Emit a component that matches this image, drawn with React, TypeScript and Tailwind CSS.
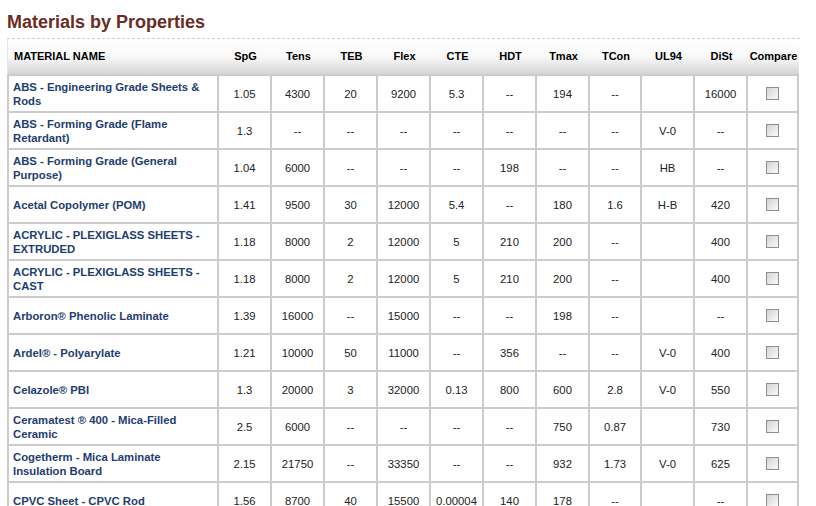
import React from "react";

type Row = { name: string; values: string[] };

const COLUMNS = ["SpG", "Tens", "TEB", "Flex", "CTE", "HDT", "Tmax", "TCon", "UL94", "DiSt", "Compare"];

const ROWS: Row[] = [
  { name: "ABS - Engineering Grade Sheets & Rods", values: ["1.05", "4300", "20", "9200", "5.3", "--", "194", "--", "", "16000"] },
  { name: "ABS - Forming Grade (Flame Retardant)", values: ["1.3", "--", "--", "--", "--", "--", "--", "--", "V-0", "--"] },
  { name: "ABS - Forming Grade (General Purpose)", values: ["1.04", "6000", "--", "--", "--", "198", "--", "--", "HB", "--"] },
  { name: "Acetal Copolymer (POM)", values: ["1.41", "9500", "30", "12000", "5.4", "--", "180", "1.6", "H-B", "420"] },
  { name: "ACRYLIC - PLEXIGLASS SHEETS - EXTRUDED", values: ["1.18", "8000", "2", "12000", "5", "210", "200", "--", "", "400"] },
  { name: "ACRYLIC - PLEXIGLASS SHEETS - CAST", values: ["1.18", "8000", "2", "12000", "5", "210", "200", "--", "", "400"] },
  { name: "Arboron® Phenolic Laminate", values: ["1.39", "16000", "--", "15000", "--", "--", "198", "--", "", "--"] },
  { name: "Ardel® - Polyarylate", values: ["1.21", "10000", "50", "11000", "--", "356", "--", "--", "V-0", "400"] },
  { name: "Celazole® PBI", values: ["1.3", "20000", "3", "32000", "0.13", "800", "600", "2.8", "V-0", "550"] },
  { name: "Ceramatest ® 400 - Mica-Filled Ceramic", values: ["2.5", "6000", "--", "--", "--", "--", "750", "0.87", "", "730"] },
  { name: "Cogetherm - Mica Laminate Insulation Board", values: ["2.15", "21750", "--", "33350", "--", "--", "932", "1.73", "V-0", "625"] },
  { name: "CPVC Sheet - CPVC Rod", values: ["1.56", "8700", "40", "15500", "0.00004", "140", "178", "--", "", "--"] },
];

// column template shared by header and body grids
const GRID = "grid grid-cols-[208px_51px_51px_51px_51px_51px_51px_51px_50px_51px_51px_49px]";

function Checkbox() {
  return (
    <span className="block w-[13px] h-[13px] border border-[#8e8e8e] bg-linear-to-br from-[#d4d4d4] to-[#fafafa]" />
  );
}

export default function App() {
  return (
    <div className="min-h-screen bg-white px-[7px] pt-[10px] font-['Liberation_Sans',Arial,sans-serif]">
      <h1 className="text-[18px] leading-[24px] font-bold text-[#6b2c25]">Materials by Properties</h1>
      <div className="mt-[4px] w-[793px] border-t border-dashed border-[#d0d0d0]" />

      <div className="w-[792px]">
        {/* Header */}
        <div className={`${GRID} gap-x-[2px] px-[2px] h-[35px] bg-linear-to-b from-white via-[#f9f9f9] to-[#d5d5d5] border-l border-[#e4e4e4] text-[11px] font-bold text-black`}>
          <div className="flex items-center pl-[4px]">MATERIAL NAME</div>
          {COLUMNS.map((c) => (
            <div key={c} className="flex items-center justify-center">
              {c}
            </div>
          ))}
        </div>

        {/* Body */}
        <div className={`${GRID} gap-[2px] p-[2px] bg-[#cccccc] text-[11.3px] leading-[14px]`}>
          {ROWS.map((row) => (
            <React.Fragment key={row.name}>
              <div className="h-[35px] bg-white flex items-center pl-[4px] pr-[8px] font-bold text-[#1e3d70]">
                {row.name}
              </div>
              {row.values.map((v, i) => (
                <div key={i} className="h-[35px] bg-white flex items-center justify-center text-[#222]">
                  {v}
                </div>
              ))}
              <div className="h-[35px] bg-white flex items-center justify-center">
                <Checkbox />
              </div>
            </React.Fragment>
          ))}
        </div>
      </div>
    </div>
  );
}
